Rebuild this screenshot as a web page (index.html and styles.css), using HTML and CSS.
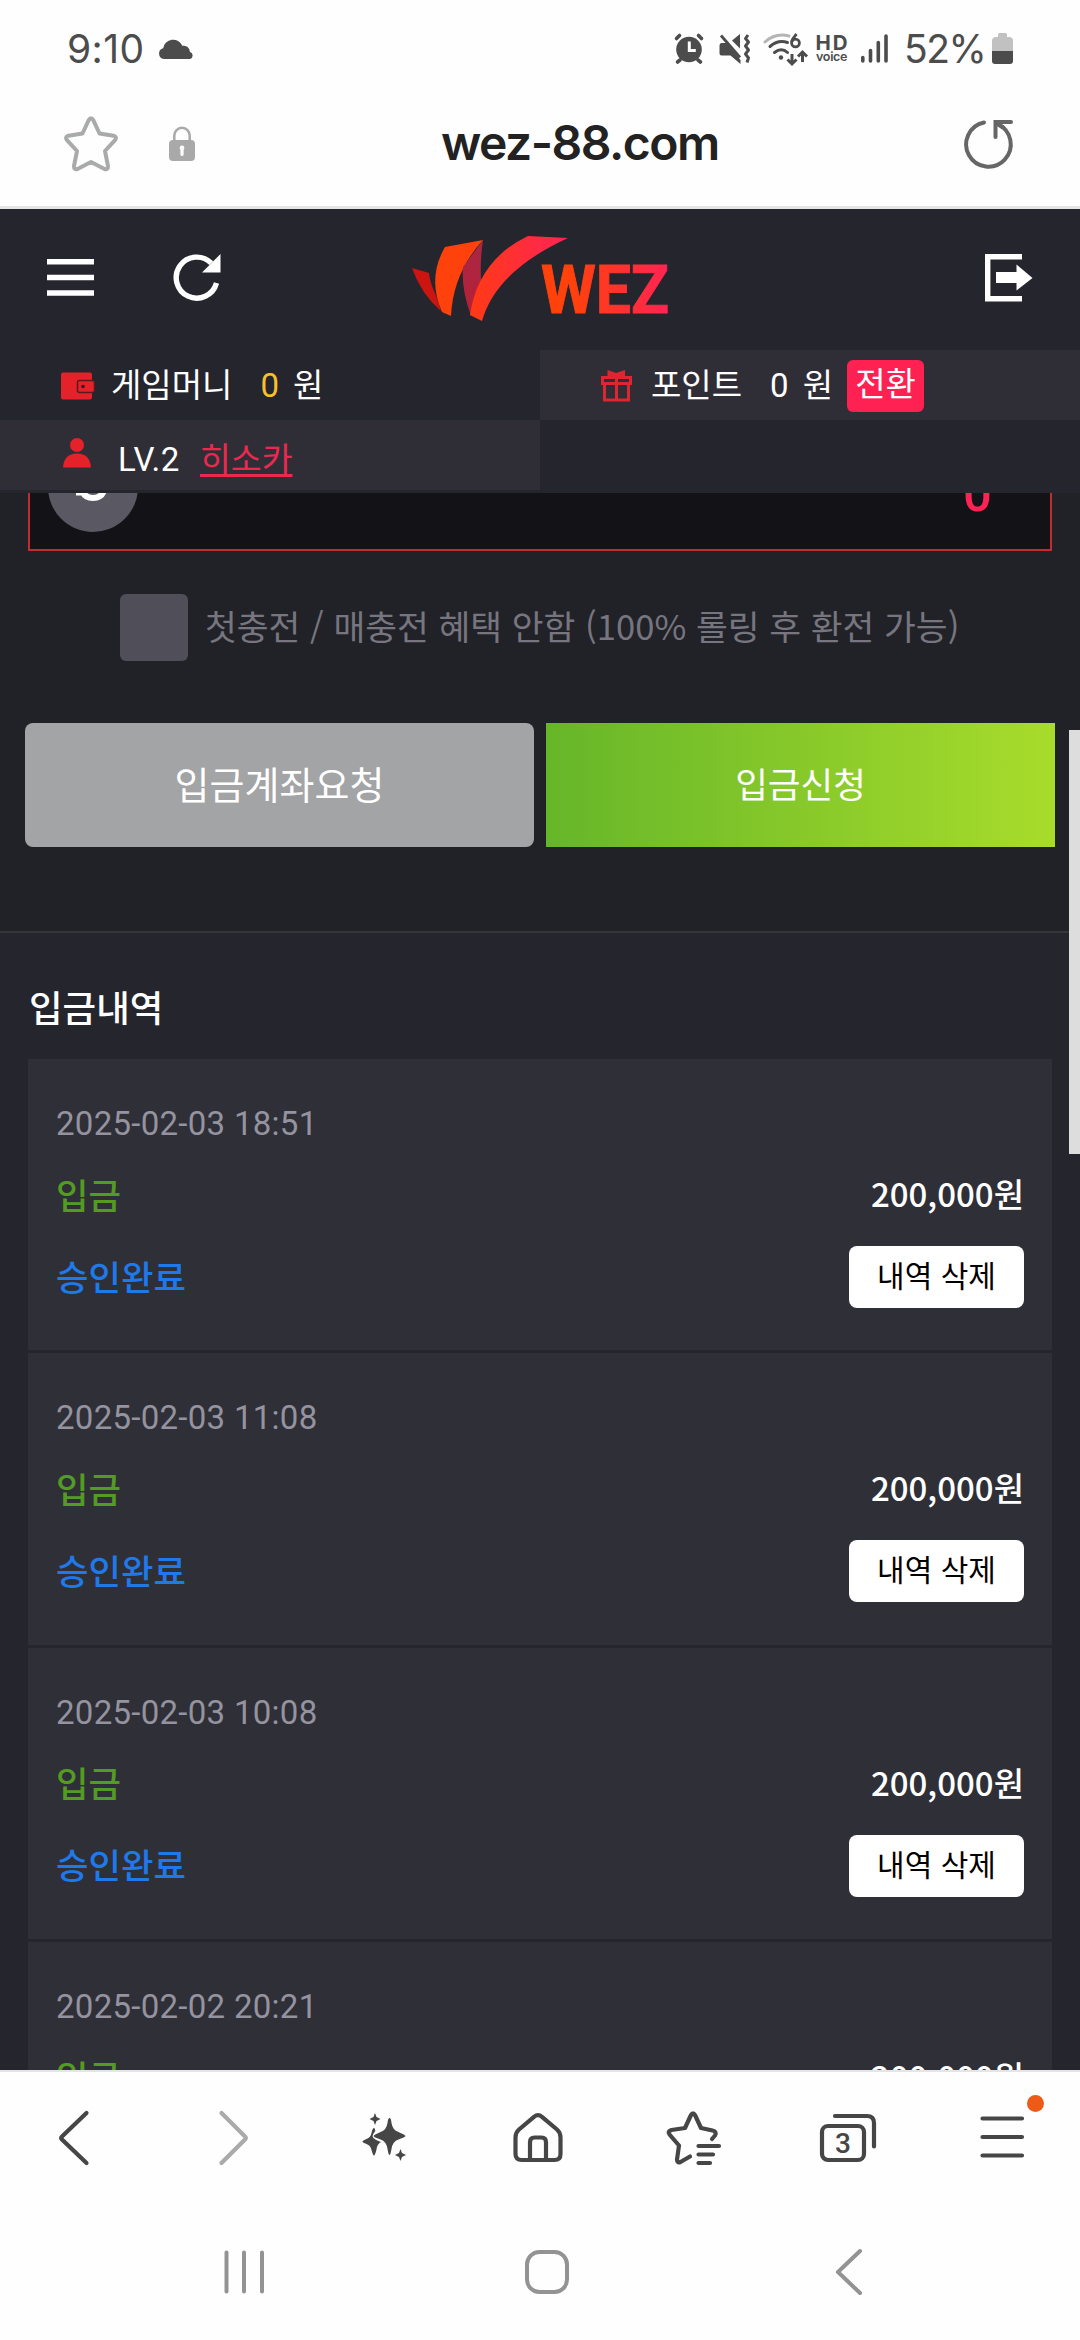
FILE: index.html
```html
<!DOCTYPE html>
<html lang="ko">
<head>
<meta charset="utf-8">
<title>wez-88.com</title>
<link rel="stylesheet" href="styles.css">
</head>
<body>
<div class="screen">
  <header class="browser-top">
    <div class="status">
      <span class="clock">9:10</span>
      <svg class="cloud" width="36" height="22" viewBox="0 0 36 22"><path fill="#4c4c4c" d="M6 21a5.500 5.500 0 0 1-.8-10.800A10 10 0 0 1 24.300 7.800 6.500 6.500 0 0 1 32 13.900 3.700 3.700 0 0 1 32 21z"/></svg>
      <svg class="status-icons" width="220" height="34" viewBox="0 0 220 34" fill="none" stroke="#4c4c4c">
        <circle cx="17" cy="17.500" r="12.800" fill="#4c4c4c" stroke="none"/>
        <path stroke-width="3.600" stroke-linecap="round" d="M4.500 6.500l3-3M29.500 6.500l-3-3M8 28l-2.500 2M26 28l2.500 2"/>
        <path stroke="#fff" stroke-width="3" d="M17.300 9.500v9h6.500"/>
        <path fill="#4c4c4c" stroke="none" d="M49.500 11h5l14 17v4l-10-8.500h-9q-2 0-2-2v-8q0-2.500 2-2.500zM60 8.500l8-6.500v14.500z"/>
        <path stroke-width="2.800" d="M49 3.500l19 22"/>
        <path stroke-width="3" stroke-linejoin="round" d="M76 3l-2.500 3.500 3 3.500-3 4 3 4-3 4 3 4-1.500 4.500"/>
        <path stroke="#b5b5b5" stroke-width="3" stroke-linecap="round" d="M93 10q10.500-9.500 24-6"/>
        <path stroke-width="3" stroke-linecap="round" d="M98 14.500q8-7 17.500-4M102.500 20.500q7-5.500 13 0"/>
        <circle cx="109" cy="25.500" r="2.200" fill="#4c4c4c" stroke="none"/>
        <path stroke-width="2.800" d="M124.500 2q-4 4.500-5 8"/><circle cx="123.500" cy="11" r="3.900" stroke-width="2.800"/>
        <path stroke-width="3" d="M120 22v10M115.500 27.500l4.500 4.500 4.500-4.500M130.500 30V20M126 24.500l4.500-4.500 4.500 4.500"/>
        <text x="143.500" y="17.500" font-family="Inter" font-weight="700" font-size="20.500" textLength="32" fill="#4c4c4c" stroke="none">HD</text>
        <text x="144" y="28.500" font-family="Inter" font-weight="600" font-size="12.500" textLength="31.500" fill="#4c4c4c" stroke="none">voice</text>
        <path stroke-width="3.600" stroke-linecap="round" d="M190.800 25.500v3.500M198.500 18.500V29M206.300 10.500V29M214 4V29"/>
      </svg>
      <span class="percent">52%</span>
      <svg class="battery" width="21" height="32" viewBox="0 0 21 32"><path fill="#c1c1c1" d="M6 1.500Q6 0 7.500 0h6Q15 0 15 1.500V4h2q4 0 4 4v10H0V8q0-4 4-4h2z"/><path fill="#4c4c4c" d="M0 18h21v10q0 3-3 3H3q-3 0-3-3z"/></svg>
    </div>
    <div class="address">
      <svg class="fav" width="54" height="56" viewBox="0 0 54 56"><path fill="none" stroke="#a9abaa" stroke-width="4" stroke-linejoin="round" d="M24.700 4.200q2.300-4 4.600 0L35.500 17.500 49.500 19.700q4 1.200 1.500 4.500L41 35l3 15q.2 4-3.500 3L27 46 13.500 53q-3.700 1-3.500-3L13 35 3 24.200q-2.500-3.300 1.500-4.500l14-2.200z"/></svg>
      <svg class="lock" width="26" height="36" viewBox="0 0 26 36"><path fill="none" stroke="#a9a9a9" stroke-width="2.500" d="M5.300 15V9.500a7.700 7.700 0 0 1 15.400 0V15"/><rect y="14" width="26" height="21" rx="4" fill="#a9a9a9"/><path stroke="#fff" stroke-width="3.200" stroke-linecap="round" d="M13 22v6.500"/><circle cx="13" cy="22" r="2.400" fill="#fff"/></svg>
      <span class="host">wez-88.com</span>
      <svg class="reload" width="50" height="52" viewBox="0 0 50 52" fill="none" stroke="#666" stroke-width="4" stroke-linecap="round"><path d="M20 4.500A22.300 22.300 0 1 0 34 6.200"/><path stroke-linejoin="miter" d="M47 4H31.500v15M32 4.500l7 5"/></svg>
    </div>
  </header>

  <main class="page">
    <div class="site-header">
      <div class="brand-bar">
        <svg class="menu" width="47" height="37" viewBox="0 0 47 37" fill="#fff"><path d="M0 0h47v5.500H0zM0 15.700h47v5.500H0zM0 31.200h47v5.500H0z"/></svg>
        <svg class="refresh" width="48" height="48" viewBox="0 0 48 48"><path fill="none" stroke="#fff" stroke-width="5.400" d="M43.500 29A20.500 20.500 0 1 1 38.300 9.200"/><path fill="#fff" d="M47.500 0v18.500H29z"/></svg>
        <svg class="logo" width="256" height="86" viewBox="0 0 256 86">
          <defs>
            <linearGradient id="swoosh"><stop offset="0" stop-color="#ff3a14"/><stop offset=".7" stop-color="#ff2a44"/><stop offset="1" stop-color="#ff2450"/></linearGradient>
            <linearGradient id="word" gradientUnits="userSpaceOnUse" x1="129" x2="256" y1="0" y2="0"><stop offset=".25" stop-color="#ff410c"/><stop offset="1" stop-color="#ff2452"/></linearGradient>
            <linearGradient id="leaf" x2="0" y2="1"><stop offset="0" stop-color="#a92745"/><stop offset="1" stop-color="#b52035"/></linearGradient>
          </defs>
          <path fill="#cc1510" d="M0 32l17 5q1 10 6 20l6 18Q9 58 0 32z"/>
          <path fill="#ff420b" d="M33 11L71 4Q41 37 39 80l-9-4Q15 42 33 11z"/>
          <path fill="url(#leaf)" d="M71 4q-3 20-2 40L59 80Q49 52 51 31z"/>
          <path fill="url(#swoosh)" d="M116 0l40 2Q84 35 70 85l-12-6Q66 24 116 0z"/>
          <text class="wordmark" x="129" y="77" textLength="128" lengthAdjust="spacingAndGlyphs" fill="url(#word)" stroke="url(#word)">WEZ</text>
        </svg>
        <svg class="exit" width="48" height="48" viewBox="0 0 48 48"><path fill="none" stroke="#fff" stroke-width="5.400" d="M37 2.700H2.700v42H37"/><path fill="#fff" d="M11 18h20.500v-7.500L47.500 24 31.500 36.500V29H11z"/></svg>
      </div>
      <div class="account">
        <div class="cell money">
          <svg width="33" height="28" viewBox="0 0 33 28"><rect width="31" height="27" y=".5" rx="2" fill="#e52129"/><rect x="16.500" y="8.500" width="17" height="12" rx="2" fill="#e52129" stroke="#5b1820" stroke-width="1.500"/><circle cx="22" cy="14.500" r="1.800" fill="#3b1820"/></svg>
          <span class="label">게임머니</span><span class="num gold">0</span><span class="unit">원</span>
        </div>
        <div class="cell points">
          <svg width="31" height="32" viewBox="0 0 31 32"><path fill="none" stroke="#dc2730" stroke-width="3" d="M1.500 7.500h28v6h-28zM3.500 13.500h24V30h-24zM15.500 7.500V30"/><path fill="#dc2730" d="M6.500 0L15 3 24 0v8H6.500z"/></svg>
          <span class="label">포인트</span><span class="num">0</span><span class="unit">원</span><span class="convert">전환</span>
        </div>
        <div class="cell user">
          <svg width="28" height="30" viewBox="0 0 28 30" fill="#e52129"><circle cx="14" cy="7" r="7"/><path d="M0 29.500Q1 15.500 14 15.500T28 29.500z"/></svg>
          <span class="level">LV.2</span><span class="nick">히소카</span>
        </div>
        <div class="cell"></div>
      </div>
    </div>

    <section class="deposit">
      <div class="amount">
        <div class="coin"><svg width="34" height="10" viewBox="0 0 34 10"><path fill="none" stroke="#fff" stroke-width="6" d="M5 -6Q7 5 17 5T29 -6"/><path stroke="#fff" stroke-width="3" d="M0 1h5"/></svg></div>
        <span class="value">0</span>
      </div>
      <div class="option"><span class="box"></span><span class="option-text">첫충전 / 매충전 혜택 안함 (100% 롤링 후 환전 가능)</span></div>
      <div class="actions"><span class="btn gray">입금계좌요청</span><span class="btn green">입금신청</span></div>
    </section>

    <section class="history">
      <h2>입금내역</h2>
      <article class="entry"><time>2025-02-03 18:51</time><div class="line type"><b>입금</b><strong>200,000원</strong></div><div class="line state"><em>승인완료</em><span class="delete">내역 삭제</span></div></article>
      <article class="entry"><time>2025-02-03 11:08</time><div class="line type"><b>입금</b><strong>200,000원</strong></div><div class="line state"><em>승인완료</em><span class="delete">내역 삭제</span></div></article>
      <article class="entry"><time>2025-02-03 10:08</time><div class="line type"><b>입금</b><strong>200,000원</strong></div><div class="line state"><em>승인완료</em><span class="delete">내역 삭제</span></div></article>
      <article class="entry"><time>2025-02-02 20:21</time><div class="line type"><b>입금</b><strong>200,000원</strong></div></article>
    </section>
    <div class="scrollbar"></div>
  </main>

  <footer class="browser-bottom">
    <nav class="toolbar">
      <svg viewBox="0 0 60 60"><path d="M42.500 6L18 29.500q-1.500 1.500 0 3L42.500 56"/></svg>
      <svg class="dim" viewBox="0 0 60 60"><path d="M22.500 6L46 29.500q1.500 1.500 0 3L22.500 56"/></svg>
      <svg viewBox="0 0 60 60" class="solid"><path d="M36.500 11Q38 11 38.500 16q1 7 7 9 7 3 7 4t-7 3.500q-6 2-7 9.500-1 6-2 6t-2-6q-1-7.500-7-9.500-7-2.500-7-3.500t7-4q6-2 7-9 .5-5 2-5z"/><path d="M21 21q1 0 1.300 3-3.300 4-2.500 6 1.200 2.500 8.200 5-4 2-4.500 7.500Q22 48.500 21 48.500T18.500 43q-.8-4.500-5-6-4-1.500-4-2.500t4-2.500q4.200-1.500 5-6 1-5 2.500-5zM22 6l1.500 4 4 2-4 2L22 18l-1.500-4-4-2 4-2zM47.500 42l1.500 4 4 2-4 2-1.500 4-1.500-4-4-2 4-2z"/></svg>
      <svg viewBox="0 0 60 60"><path d="M26 9.800q4-3.200 8 0L49 22.500q3.500 3 3.500 8V47q0 6-6 6h-33q-6 0-6-6V30.500q0-5 3.500-8zM22 53V35q0-4.500 4.500-4.500h7Q38 30.500 38 35v18"/></svg>
      <svg viewBox="0 0 60 60"><path d="M49 32l3-3.500q2-4-2.500-5L38 21 32 8q-2-3.500-4 0l-6 13-13.500 2q-4.500 1.500-2 4.500L16 38.500 14 52.500q0 4 3.500 2.500L27 49.500M35.500 39H56M35.500 47.500H50M35.500 56H47"/></svg>
      <svg viewBox="0 0 60 60"><rect x="5" y="19" width="42" height="34" rx="6"/><path d="M18 9h32q7 0 7 7v23.500"/><text x="26" y="46" text-anchor="middle" class="tab-count">3</text></svg>
      <div class="more"><svg viewBox="0 0 60 60"><path d="M10.500 11.500h39.500M10.500 30h39.500M10.500 48.500h39.500"/></svg><i class="badge"></i></div>
    </nav>
    <nav class="system">
      <svg viewBox="0 0 60 60"><path d="M12.500 10.500v39M30 10.500v39M48 10.500v39"/></svg>
      <svg viewBox="0 0 60 60"><rect x="10" y="10" width="40" height="40" rx="12.500"/></svg>
      <svg viewBox="0 0 60 60"><path d="M41 9L19 30l22 21"/></svg>
    </nav>
  </footer>
</div>
</body>
</html>
```

FILE: styles.css
```css
* { box-sizing: border-box; }
body { margin: 0; width: 1080px; height: 2340px; overflow: hidden; background: #fefefe; font-family: Roboto, "Noto Sans CJK KR", sans-serif; }
svg { display: block; flex: none; overflow: visible; }
.screen { width: 1080px; height: 2340px; display: flex; flex-direction: column; }

.browser-top { height: 209px; border-bottom: 3px solid #e4e6e4; background: #fefefe; }
.status { height: 98px; display: flex; align-items: center; padding-left: 67px; color: #4c4c4c; }
.clock, .percent { font-family: Inter, sans-serif; font-size: 39px; line-height: 60px; }
.clock { width: 91px; letter-spacing: 0.4px; }
.status-icons { margin-left: 478px; }
.percent { margin-left: 12px; width: 88px; letter-spacing: -1.5px; }
.address { height: 92px; display: flex; align-items: center; padding-left: 64px; }
.lock { margin-left: 51px; }
.host { margin-left: 246px; padding-bottom: 3px; width: 276px; color: #222; font-family: Inter, sans-serif; font-weight: 600; font-size: 48px; line-height: 60px; white-space: nowrap; letter-spacing: -1.5px; }
.reload { margin-left: 247px; }

.page { position: relative; height: 1861px; overflow: hidden; background: #212227; color: #fff; }
.site-header { height: 284px; background: #25252d; }
.brand-bar { height: 141px; display: flex; align-items: center; padding: 0 47px 4px; }
.refresh { margin-left: 79px; }
.logo { margin-left: 191px; margin-top: 2px; }
.wordmark { font-family: Roboto, sans-serif; font-weight: 700; font-size: 67px; stroke-width: 1px; }
.exit { margin-left: auto; }
.account { display: grid; grid-template-columns: 1fr 1fr; grid-template-rows: 70px 70px; font-size: 33px; }
.cell { display: flex; align-items: center; padding: 2px 0 0 61px; line-height: 50px; }
.points, .user { background: #2f2e37; }
.user { padding: 0 0 4px 63px; }
.label { margin-left: 17px; }
.points .label { margin-left: 19px; }
.num { margin-left: 28px; }
.gold { color: #f8c02e; }
.unit { margin-left: 14px; }
.convert { margin-left: 14px; width: 77px; height: 52px; border-radius: 6px; background: #ff2152; text-align: center; }
.level { margin: 13px 0 0 27px; letter-spacing: 0.6px; }
.nick { margin: 13px 0 0 20px; color: #ec2851; font-size: 33.500px; text-decoration: underline; text-decoration-thickness: 3px; text-underline-offset: 3px; }

.deposit { height: 438px; padding: 0 25px; }
.amount { height: 58px; margin: 0 3px; padding: 0 58px 0 18px; border: 2px solid #c12c33; border-top: 0; background: #121217; display: flex; justify-content: space-between; overflow: hidden; }
.coin { width: 90px; height: 90px; margin-top: -51px; padding: 51px 0 0 28px; border-radius: 50%; background: #5a5963; }
.value { margin-top: -29px; color: #ff2355; font-weight: 500; font-size: 51px; line-height: 60px; }
.option { margin-top: 43px; height: 67px; padding-left: 95px; display: flex; align-items: center; color: #77757f; font-family: "Noto Sans CJK KR", sans-serif; font-size: 34.600px; white-space: nowrap; }
.option-text { padding-bottom: 6px; }
.box { width: 68px; height: 67px; margin-right: 17px; border-radius: 6px; background: #504f59; }
.actions { margin-top: 62px; display: grid; grid-template-columns: 1fr 1fr; gap: 12px; }
.btn { height: 124px; line-height: 120px; text-align: center; font-family: "Noto Sans CJK KR", sans-serif; }
.gray { border-radius: 8px; background: #a3a4a6; font-size: 38px; }
.green { background: linear-gradient(90deg, #66b629, #a8dc2b); font-size: 35.500px; }

.history { height: 1139px; border-top: 2px solid #343439; padding: 0 28px; background: #25252d; font-family: "Noto Sans CJK KR", sans-serif; }
h2 { margin: 0; height: 126px; padding: 47px 0 0 1px; font-size: 36.500px; font-weight: 500; line-height: 54px; }
.entry { height: 291.330px; margin-bottom: 3px; padding: 39px 28px 0; background: #2f2f37; }
time { display: block; height: 51px; line-height: 52px; font-family: Roboto, sans-serif; font-size: 33px; letter-spacing: 0.280px; color: #94939f; }
.line { display: flex; justify-content: space-between; align-items: center; }
.type { height: 92px; padding-bottom: 4px; }
.state { height: 72px; }
b, em { font-style: normal; font-weight: 500; font-size: 35.300px; }
b { color: #549b24; }
em { padding-bottom: 4px; color: #1f79e8; }
strong { font-size: 33px; font-weight: 500; }
.delete { width: 175px; height: 62px; border-radius: 8px; background: #fff; color: #000; text-align: center; line-height: 56px; font-size: 30px; }
.scrollbar { position: absolute; right: 0; top: 521px; width: 11px; height: 424px; background: #ddd; }

.browser-bottom { height: 270px; border-top: 2px solid #e5e5e7; background: #fefefe; }
.browser-bottom svg { width: 60px; height: 60px; fill: none; stroke: #464646; stroke-width: 4.200; stroke-linecap: round; stroke-linejoin: round; }
.toolbar { height: 132px; display: flex; justify-content: space-between; align-items: center; padding: 0 48px 3px 44px; }
.toolbar .dim { stroke: #aaa; }
.browser-bottom .toolbar .solid { fill: #464646; stroke: none; }
.browser-bottom .toolbar .dim { stroke: #aaa; }
.tab-count { font-family: Roboto, sans-serif; font-size: 28px; font-weight: 500; fill: #464646; stroke: none; }
.more { position: relative; }
.badge { position: absolute; left: 55px; top: -12px; width: 17px; height: 17px; border-radius: 50%; background: #ee5b16; }
.system { height: 136px; display: flex; justify-content: space-between; align-items: center; padding: 0 201px 0 214px; }
.browser-bottom .system svg { stroke: #939393; stroke-width: 4; }
```
